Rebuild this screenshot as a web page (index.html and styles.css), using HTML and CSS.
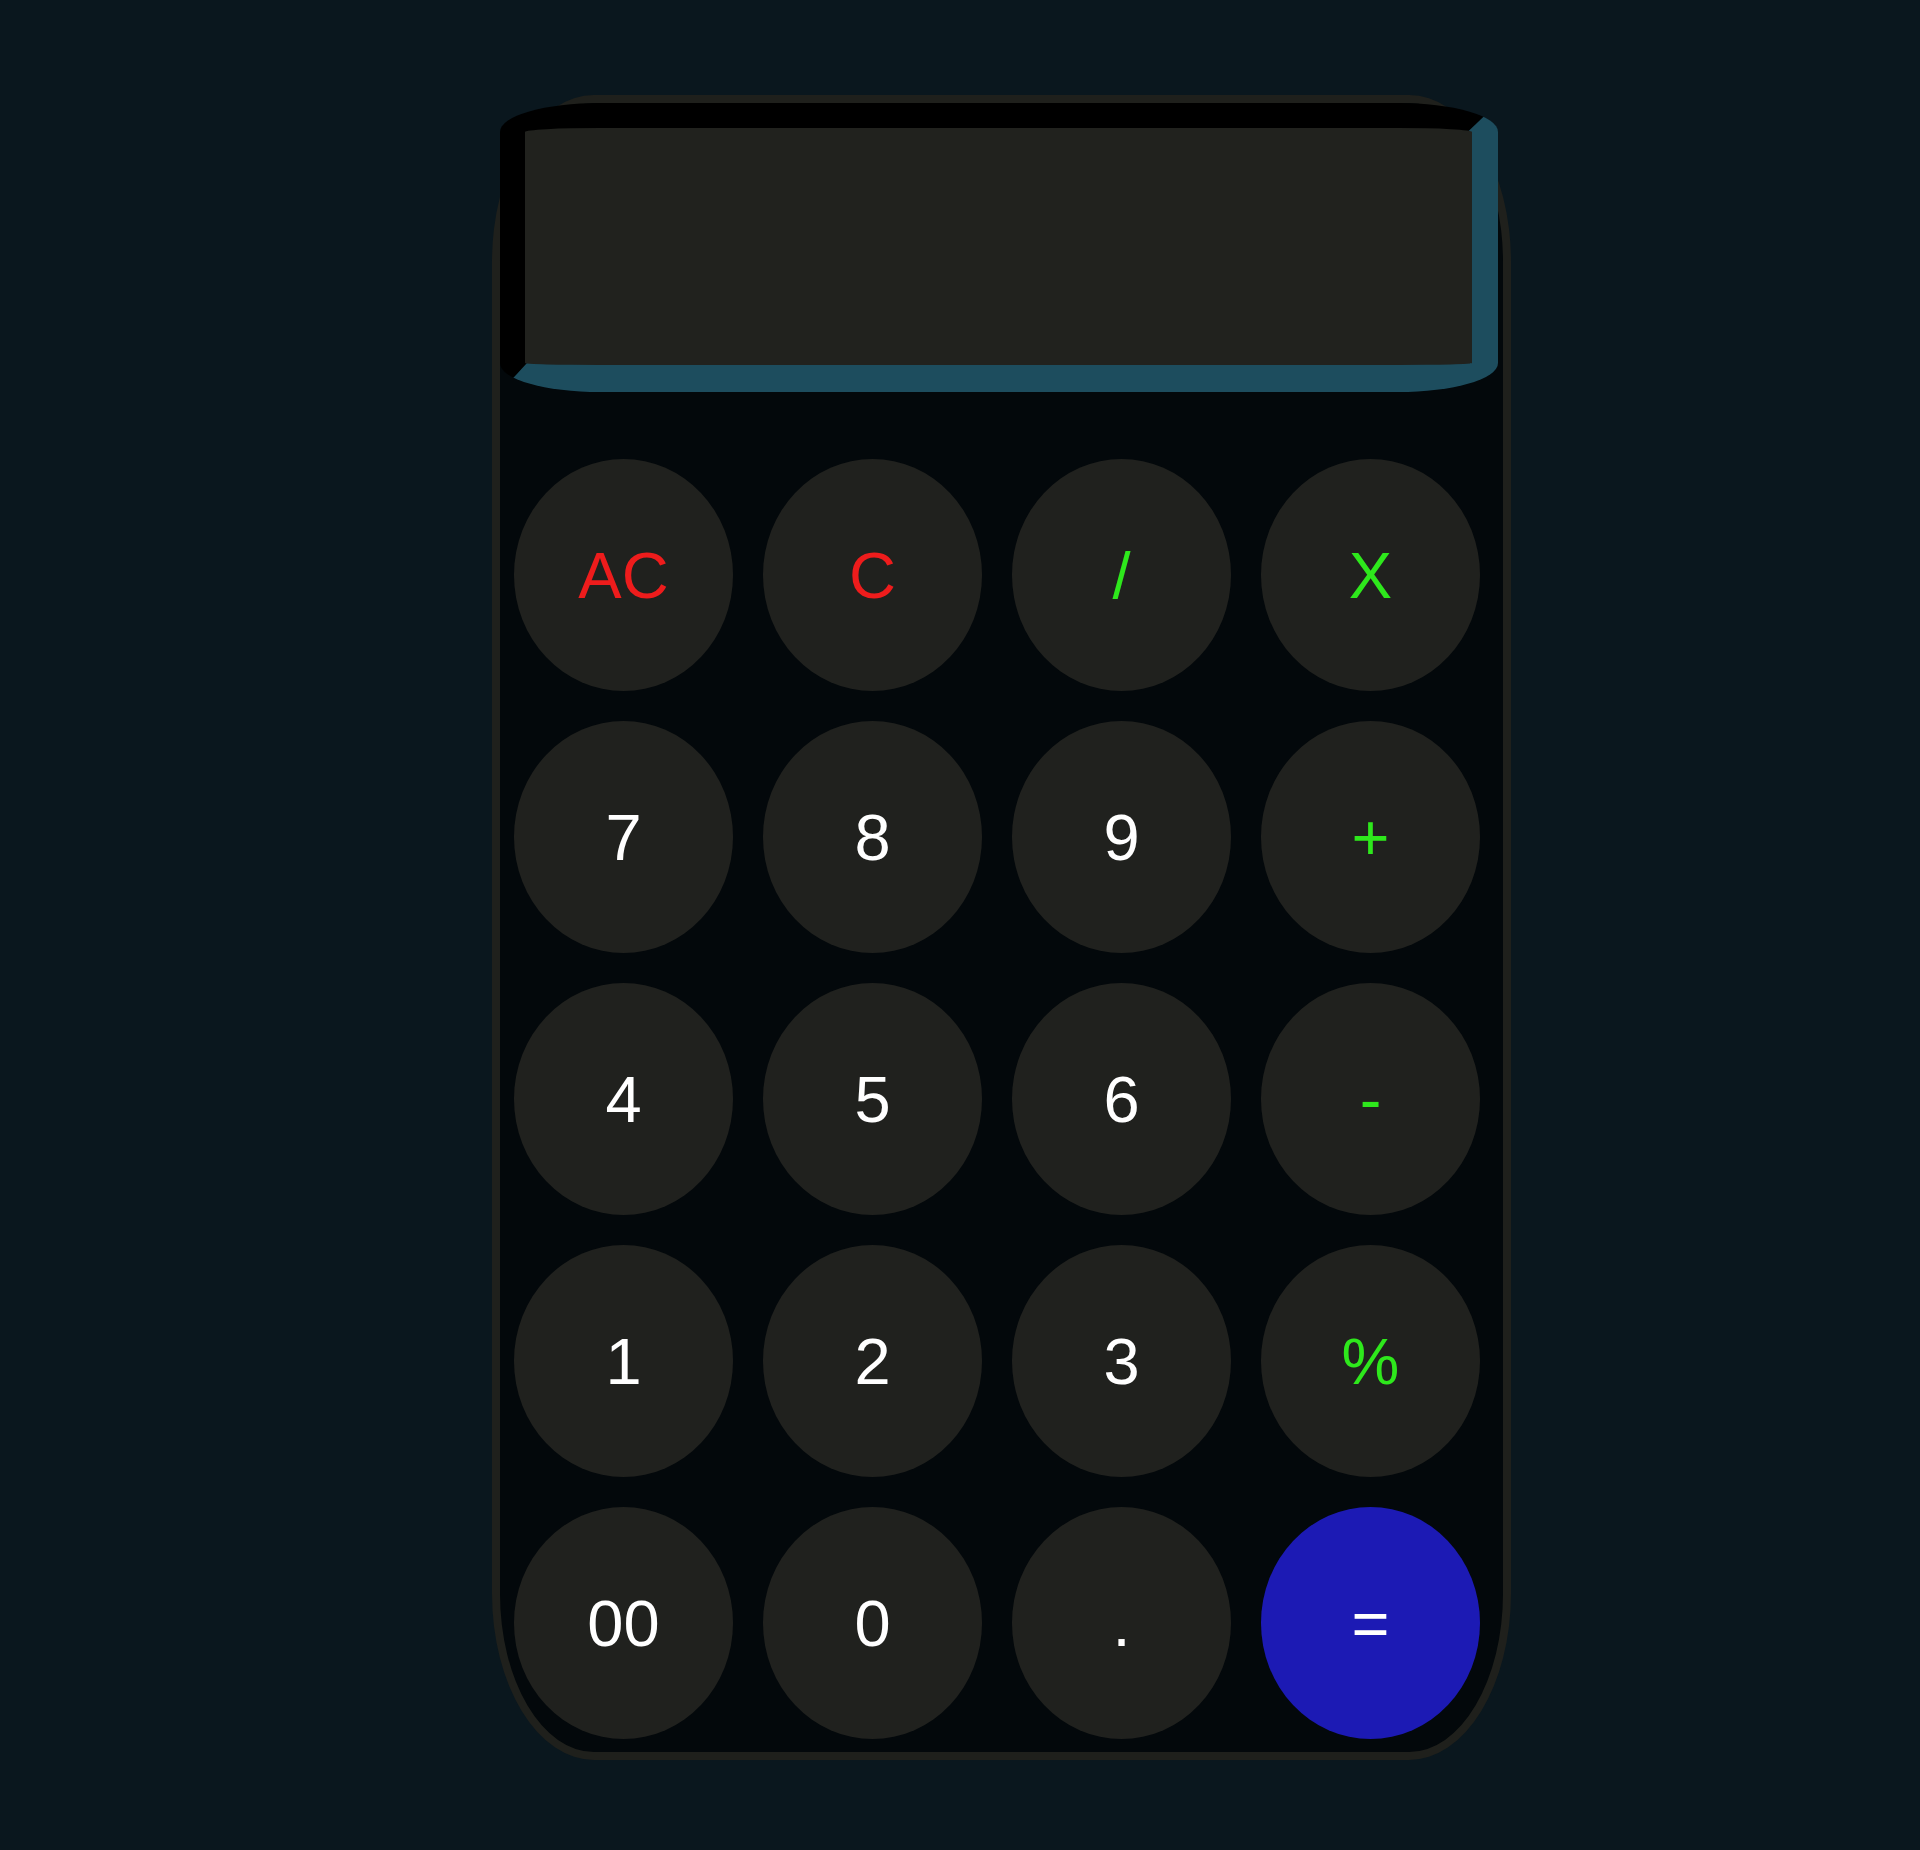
FILE: index.html
```html
<!DOCTYPE html>
<html lang="en">
<head>
<meta charset="utf-8">
<title>Calculator</title>
<link rel="stylesheet" href="styles.css">
</head>
<body>
<div class="stage">
  <div class="calculator">
    <div class="display"></div>
    <div class="keys">
      <button class="key red">AC</button>
      <button class="key red">C</button>
      <button class="key green">/</button>
      <button class="key green">X</button>
      <button class="key">7</button>
      <button class="key">8</button>
      <button class="key">9</button>
      <button class="key green">+</button>
      <button class="key">4</button>
      <button class="key">5</button>
      <button class="key">6</button>
      <button class="key green">-</button>
      <button class="key">1</button>
      <button class="key">2</button>
      <button class="key">3</button>
      <button class="key green">%</button>
      <button class="key">00</button>
      <button class="key">0</button>
      <button class="key">.</button>
      <button class="key equals">=</button>
    </div>
  </div>
</div>
</body>
</html>
```

FILE: styles.css
```css
* { box-sizing: border-box; }

html, body {
  margin: 0;
  background: #0a171e;
  font-family: "Liberation Sans", Arial, sans-serif;
}

body {
  min-height: 1850px;
}

.stage {
  padding: 95px 0 0 492px;
}

.calculator {
  width: 1019px;
  height: 1665px;
  border: 8px solid #1f201c;
  border-radius: 10%;
  background: #03080b;
  display: flex;
  flex-direction: column;
}

.display {
  width: 998px;
  height: 289px;
  background: #21221e;
  border-style: solid;
  border-width: 25px 26px 27px 25px;
  border-color: #000 #1d4d5e #1d4d5e #000;
  border-radius: 10%;
}

.keys {
  display: grid;
  grid-template-columns: repeat(4, 219px);
  grid-auto-rows: 232px;
  column-gap: 30px;
  row-gap: 30px;
  padding: 67px 0 0 14px;
}

.key {
  border: none;
  margin: 0;
  padding: 0;
  border-radius: 50%;
  background: #20211e;
  color: #ffffff;
  font-family: "Liberation Sans", Arial, sans-serif;
  font-size: 65px;
  display: flex;
  align-items: center;
  justify-content: center;
}

.key.red { color: #ee1c1c; }
.key.green { color: #2ee81c; }
.key.equals { background: #1c1ab4; }
```
